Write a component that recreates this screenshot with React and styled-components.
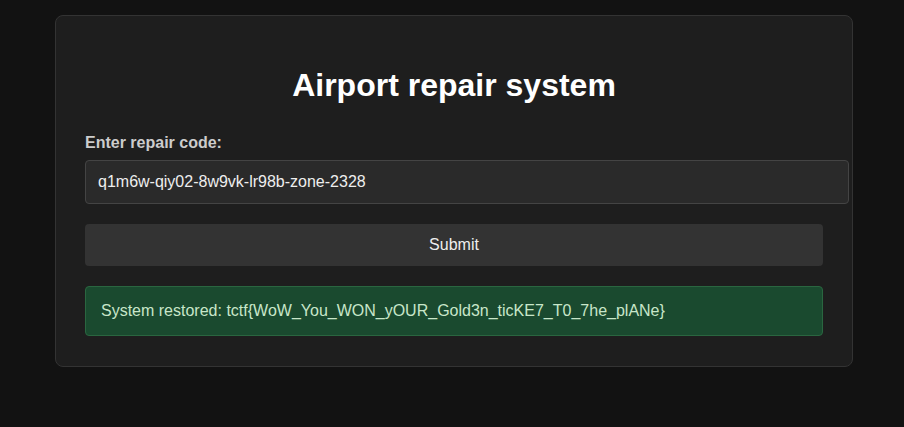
import styled, { createGlobalStyle } from "styled-components";

const GlobalStyle = createGlobalStyle`
  html, body {
    margin: 0;
    padding: 0;
    background: #121212;
    color: #e0e0e0;
    font-family: "Liberation Sans", Arial, sans-serif;
  }
`;

const Card = styled.div`
  box-sizing: border-box;
  width: 798px;
  margin: 15px 0 0 55px;
  padding: 30px 29px;
  background: #1e1e1e;
  border: 1px solid #333;
  border-radius: 8px;
`;

const Title = styled.h1`
  margin: 21px 0 30px;
  font-size: 32px;
  font-weight: bold;
  line-height: 37px;
  text-align: center;
  color: #fff;
`;

const Label = styled.label`
  display: block;
  margin-bottom: 8px;
  font-size: 16px;
  font-weight: bold;
  line-height: 18px;
  color: #cccccc;
`;

const Input = styled.input`
  display: block;
  width: 100%;
  margin: 0 0 20px;
  padding: 12px;
  font-family: inherit;
  font-size: 16px;
  line-height: 18px;
  color: #eee;
  background: #2a2a2a;
  border: 1px solid #444;
  border-radius: 4px;
  outline: none;
`;

const Button = styled.button`
  display: block;
  width: 100%;
  margin: 0 0 20px;
  padding: 12px;
  font-family: inherit;
  font-size: 16px;
  line-height: 18px;
  color: #eee;
  background: #333;
  border: none;
  border-radius: 4px;
`;

const Result = styled.div`
  padding: 15px;
  font-size: 16px;
  line-height: 18px;
  color: #c8e6c9;
  background: #1a4a2f;
  border: 1px solid #2a6640;
  border-radius: 4px;
`;

export default function App() {
  return (
    <>
      <GlobalStyle />
      <Card>
        <Title>Airport repair system</Title>
        <Label htmlFor="code">Enter repair code:</Label>
        <Input id="code" defaultValue="q1m6w-qiy02-8w9vk-lr98b-zone-2328" />
        <Button>Submit</Button>
        <Result>System restored: tctf{"{"}WoW_You_WON_yOUR_Gold3n_ticKE7_T0_7he_plANe{"}"}</Result>
      </Card>
    </>
  );
}
